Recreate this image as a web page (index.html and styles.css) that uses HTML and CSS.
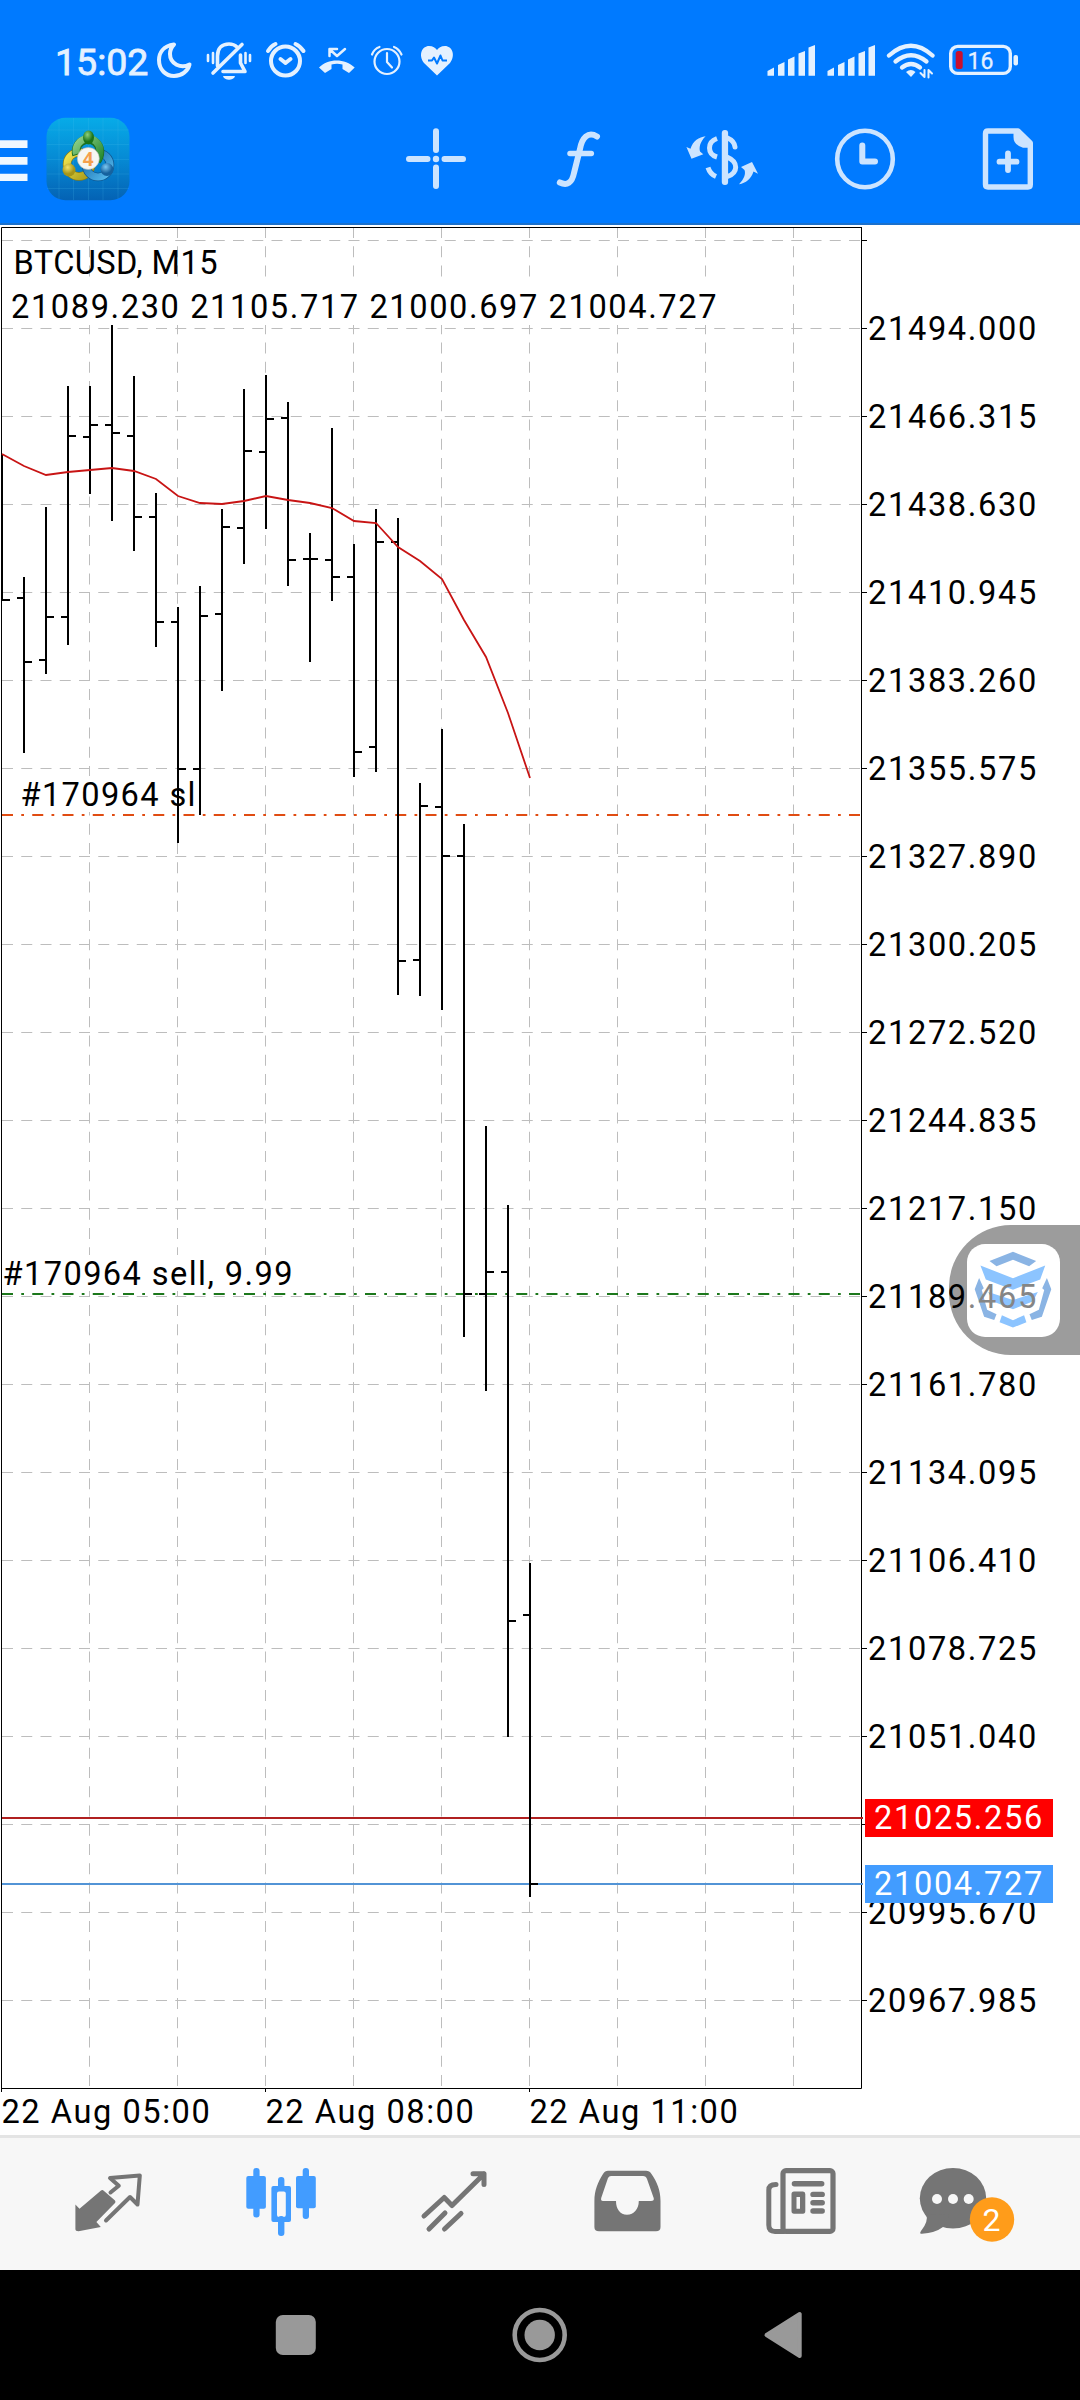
FILE: index.html
```html
<!DOCTYPE html>
<html lang="en">
<head>
<meta charset="utf-8">
<title>BTCUSD, M15</title>
<link rel="stylesheet" href="styles.css">
</head>
<body>
<header class="header">
  <div class="status">
    <span class="time">15:02</span>
    <svg class="ic" width="45" height="42" viewBox="155 40 45 42"><path class="ln" stroke-width="4" d="M174 44.5C163 46 159 53 159 60C159 70 166 76 174 76C182 76 188 71 189.500 64.500C181 69 170 64 170 54C170 50 171.500 47 174 44.500Z"/></svg>
    <svg class="ic" width="56" height="42" viewBox="200 40 56 42">
      <path class="ln" stroke-width="3.600" d="M217.500 66V56C217.500 48 222 44 229 44C232 44 235 45 237 47M242 44.500L213 73M240.500 55V63L245 71.500H223"/>
      <path class="ln" stroke-width="2.600" d="M208 55v6M213 53v10M245.500 53v10M250 55v6"/><path class="fl" d="M223 76H235C234 81 224 81 223 76Z"/>
    </svg>
    <svg class="ic" width="56" height="42" viewBox="256 40 56 42"><circle class="ln" stroke-width="4" cx="285.500" cy="61" r="14.500"/><path class="ln" stroke-width="4" d="M268 51Q271 46 275.500 44M303.500 51Q300 46 295.500 44M280.500 59L285.500 63L290.500 59"/></svg>
    <svg class="ic" width="56" height="42" viewBox="312 40 56 42"><path class="fl" d="M319 67.500C328 58 345 58 354.700 67.500L349 73L342.500 69V64.500Q337 63 331.500 64.500V69L325 73Z"/><path class="ln" stroke-width="2.500" d="M329.500 56V49H337M330.500 50L337 56L345 49" stroke-linejoin="miter"/></svg>
    <svg class="ic" width="44" height="42" viewBox="368 40 44 42"><circle class="ln" stroke-width="2.200" cx="387" cy="61.500" r="12.500"/><path class="ln" stroke-width="2.200" d="M387 53V62L392 67.500M372 54.500Q374 49 379.500 47M401.500 54.500Q399 49 394 47"/></svg>
    <svg class="ic" width="50" height="42" viewBox="412 40 50 42"><path class="fl" d="M437 75.500L424 63C418 55 422 46 429 46C433 46 435.500 48 437 50C438.500 48 441 46 445 46C452 46 456 55 450 63Z"/><path fill="none" stroke="#007aff" stroke-width="2" stroke-linejoin="round" d="M428 60.500H432L434 57.500L437 63.500L440.500 55.500L442.500 60.500H447"/></svg>
    <svg class="ic push" width="60" height="42" viewBox="764 40 60 42"><path class="fl" id="sig" d="M767.500 75.700V71L774 67.500V75.700ZM778 75.700V65L784.500 62V75.700ZM788 75.700V59.500L794.500 56.500V75.700ZM798.500 75.700V53.500L805 51V75.700ZM808.500 75.700V47.500L815 45V75.700Z"/></svg>
    <svg class="ic" width="60" height="42" viewBox="764 40 60 42"><use href="#sig"/></svg>
    <svg class="ic" width="56" height="42" viewBox="884 40 56 42"><g class="ln" stroke-width="4.300" stroke-linecap="butt"><path d="M889 55.500Q911 36 932.500 55.500"/><path d="M895.500 61.500Q911 49 926.500 61.500"/><path d="M902 67.500Q911 60.500 920 67.500"/></g><path class="fl" d="M906 72Q911 68 915.500 72L911 77Z"/><path class="ln" stroke-width="2" d="M924.500 70V77L920.500 73M928.500 77.500V70L932 73.500"/></svg>
    <svg class="ic" width="90" height="42" viewBox="940 40 90 42"><rect class="ln" stroke-width="3.400" x="950.700" y="46.400" width="59.600" height="27" rx="7"/><rect x="955.700" y="51" width="7" height="18" rx="2.500" fill="#c8102e"/><rect class="fl" x="1013.500" y="55" width="4.500" height="10.500" rx="2"/><text class="battery" x="967.500" y="69.200">16</text></svg>
  </div>
  <div class="toolbar">
    <svg class="ic" width="140" height="100" viewBox="0 110 140 100">
      <defs>
        <linearGradient id="bg" x1="0" y1="0" x2="0" y2="1"><stop offset="0" stop-color="#07abe8"/><stop offset=".5" stop-color="#068ad4"/><stop offset="1" stop-color="#0462b4"/></linearGradient>
        <linearGradient id="gr" x1="0" y1="0" x2="1" y2="1"><stop offset="0" stop-color="#8ed08a"/><stop offset="1" stop-color="#23872c"/></linearGradient>
        <linearGradient id="go" x1="0" y1="0" x2="1" y2="1"><stop offset="0" stop-color="#f3e752"/><stop offset="1" stop-color="#a89a18"/></linearGradient>
        <linearGradient id="bl" x1="0" y1="0" x2="1" y2="1"><stop offset="0" stop-color="#1466a8"/><stop offset="1" stop-color="#56bbee"/></linearGradient>
        <radialGradient id="gh" cx=".4" cy=".3"><stop offset="0" stop-color="#8fd07c"/><stop offset="1" stop-color="#1a7419"/></radialGradient>
        <radialGradient id="oh" cx=".4" cy=".3"><stop offset="0" stop-color="#f2e36a"/><stop offset="1" stop-color="#a69518"/></radialGradient>
        <radialGradient id="bh" cx=".4" cy=".3"><stop offset="0" stop-color="#7cc8f2"/><stop offset="1" stop-color="#15629f"/></radialGradient>
      </defs>
      <path fill="#f0f8ff" d="M0 140.300H27.500V148H0ZM0 157H27.500V164.700H0ZM0 173.700H27.500V181H0Z"/>
      <rect x="46.500" y="117.700" width="83" height="82.600" rx="19" fill="url(#bg)"/>
      <path stroke="#4fc0ee" stroke-opacity=".18" fill="none" d="M59 119V199M73.500 118V200M88.500 118V200M103 118V200M118 119V199M47 130H129M47 144.500H129M47 159.500H129M47 174H129M47 188.500H129"/>
      <circle cx="79" cy="164.500" r="12" fill="none" stroke="#8a7e10" stroke-width="8.500"/><circle cx="79" cy="164.500" r="12" fill="none" stroke="url(#go)" stroke-width="7"/>
      <circle cx="98" cy="165" r="12" fill="none" stroke="#0d5690" stroke-width="8.500"/><circle cx="98" cy="165" r="12" fill="none" stroke="url(#bl)" stroke-width="7"/>
      <path d="M76.500 155A12 12 0 1 1 100 151Q100 157 97 161" fill="none" stroke="#1c6e22" stroke-width="8.500"/><path d="M76.500 154A12 12 0 1 1 100 151Q100 157 97 161" fill="none" stroke="url(#gr)" stroke-width="7"/>
      <ellipse cx="88.500" cy="137.500" rx="5.500" ry="7" fill="url(#gh)"/><circle cx="69" cy="170" r="6.500" fill="url(#oh)"/><circle cx="107" cy="169.500" r="6.500" fill="url(#bh)"/>
      <circle cx="88.300" cy="158.500" r="11" fill="#f6f6f2" stroke="#b5b9b0" stroke-width=".6"/><text class="four" x="88.300" y="165.500">4</text>
    </svg>
    <svg class="ic push" width="120" height="100" viewBox="396 110 120 100"><path class="tl" stroke-width="6" d="M436 131.300V150M436 167.500V186M409 159H427.500M444.500 159H463"/><circle class="tf" cx="436" cy="159" r="3.200"/></svg>
    <svg class="ic" width="140" height="100" viewBox="516 110 140 100"><path class="tl" stroke-width="6" stroke-linecap="butt" d="M597 136.500C588 131 582 138 580 149L574 173C572 183 567 186 559.800 182.500"/><path class="tl" stroke-width="5.500" stroke-linecap="butt" d="M570 153.500H591.300"/></svg>
    <svg class="ic" width="164" height="100" viewBox="656 110 164 100">
      <rect class="tf" x="721.800" y="130" width="6.300" height="55" rx="3"/>
      <g class="tl" stroke-width="5"><path stroke-linecap="butt" d="M717 138.500C707 142 707 154 717 157"/><path d="M727.500 138Q734.500 141 735 147"/><path d="M708 167.500Q710 174 716 176.500" stroke-linecap="butt"/><path d="M727 157C739 162 738 173 727.500 176.500"/></g>
      <path class="tf" d="M705.600 136.300C700 142 699 147 700 151.500L703.300 154.300L691.500 158.700L686.400 147L690.500 148.700C693 141 699 137 705.600 136.300ZM739 184.300C744 179 746 174 744.500 170L741 167L752 162L758 173.700L753.500 171.500C751 179 746 183 739 184.300Z"/>
    </svg>
    <svg class="ic" width="148" height="100" viewBox="820 110 148 100"><ellipse class="tl" stroke-width="4.600" cx="865" cy="159" rx="27.800" ry="28.300"/><path class="tl" stroke-width="6" d="M862.300 145.500V161.500H875"/></svg>
    <svg class="ic" width="80" height="100" viewBox="968 110 80 100"><path class="tl" stroke-width="5.400" d="M1018 131H988Q985.500 131 985.500 133.500V184.500Q985.500 187 988 187H1028Q1030.300 187 1030.300 184.500V143Z"/><path class="tf" d="M1013.500 129.500H1019L1032 142V147.700H1023Q1013.500 145 1013.500 137Z"/><path class="tl" stroke-width="5.800" d="M1008 153.500V170M999.500 161.700H1016.500"/></svg>
  </div>
</header>

<main class="chart">
  <div class="board">
    <svg class="plot" width="868" height="1868" viewBox="0 225 868 1868">
      <g class="grid" stroke-dasharray="11 8.250">
        <path d="M2 240.500H861M2 328.500H861M2 416.500H861M2 504.500H861M2 592.500H861M2 680.500H861M2 768.500H861M2 856.500H861M2 944.500H861M2 1032.500H861M2 1120.500H861M2 1208.500H861M2 1296.500H861M2 1384.500H861M2 1472.500H861M2 1560.500H861M2 1648.500H861M2 1736.500H861M2 1824.500H861M2 1912.500H861M2 2000.500H861"/>
        <path d="M89.500 227V2088M177.500 227V2088M265.500 227V2088M353.500 227V2088M441.500 227V2088M529.500 227V2088M617.500 227V2088M705.500 227V2088M793.500 227V2088"/>
      </g>
      <path fill="#fff" d="M8 284H718V325H8ZM18 776H196V812H18ZM3 1255H294V1291H3Z"/>
      <path class="frame" d="M862 227.500H1.500V2092M861.500 227V2088.500H1.500M265.500 2088V2092M529.500 2088V2092M862 240.500h5M862 328.500h5M862 416.500h5M862 504.500h5M862 592.500h5M862 680.500h5M862 768.500h5M862 856.500h5M862 944.500h5M862 1032.500h5M862 1120.500h5M862 1208.500h5M862 1296.500h5M862 1384.500h5M862 1472.500h5M862 1560.500h5M862 1648.500h5M862 1736.500h5M862 1824.500h5M862 1912.500h5M862 2000.500h5"/>
      <path class="level" stroke="#e04c12" stroke-dasharray="11 8.250 2.750 8.250" d="M2 815H861"/>
      <path class="level" stroke="#1c781c" stroke-dasharray="11 8.250 2.750 8.250" d="M2 1294H861"/>
      <path class="level" stroke="#b02020" d="M2 1818H863"/>
      <path class="level" stroke="#5294d6" d="M2 1884H863"/>
      <g class="bars">
        <path d="M2 454V601M2 600H10"/>
        <path d="M24 577V753M17 598H24M24 662H32"/>
        <path d="M46 507V674M39 660H46M46 617H54"/>
        <path d="M68 386V645M61 617H68M68 436H76"/>
        <path d="M90 386V494M83 437H90M90 425H98"/>
        <path d="M112 325V521M105 425H112M112 433H120"/>
        <path d="M134 376V551M127 436H134M134 517H142"/>
        <path d="M156 493V647M149 517H156M156 622H164"/>
        <path d="M178 607V843M171 622H178M178 769H186"/>
        <path d="M200 586V815M193 769H200M200 616H208"/>
        <path d="M222 509V691M215 614H222M222 527H230"/>
        <path d="M244 389V564M237 528H244M244 451H252"/>
        <path d="M266 375V529M259 452H266M266 419H274"/>
        <path d="M288 402V586M281 418H288M288 560H296"/>
        <path d="M310 533V662M303 559H310M310 559H318"/>
        <path d="M332 428V601M325 560H332M332 577H340"/>
        <path d="M354 544V777M347 577H354M354 752H362"/>
        <path d="M376 509V772M369 747H376M376 542H384"/>
        <path d="M398 518V995M391 542H398M398 961H406"/>
        <path d="M420 783V996M413 960H420M420 806H428"/>
        <path d="M442 729V1010M435 807H442M442 856H450"/>
        <path d="M464 824V1337M457 856H464M464 1294H472"/>
        <path d="M486 1126V1391M479 1294H486M486 1272H494"/>
        <path d="M508 1205V1737M501 1272H508M508 1621H516"/>
        <path d="M530 1563V1897M523 1615H530M530 1884H538"/>
      </g>
      <polyline class="ma" points="2,454 24,466 46,475 68,472 90,470 112,468 134,471 156,479 178,496 200,503 222,504 244,501 266,496 288,500 310,503 332,508 354,521 376,523 398,547 420,561 442,579 464,620 486,657 508,713 530,778"/>
      <text x="13.500" y="273.700" textLength="204">BTCUSD, M15</text>
      <text x="11" y="318.200" textLength="705.500">21089.230 21105.717 21000.697 21004.727</text>
      <text x="20.500" y="805.700" textLength="175">#170964 sl</text>
      <text x="2.500" y="1285.200" textLength="290">#170964 sell, 9.99</text>
    </svg>
    <div class="axis">
      <div class="bubble"><svg width="93" height="93" viewBox="382 193 277 277">
        <rect x="382" y="193" width="277" height="277" rx="54" fill="#fff"/>
        <path fill="#8ab4e4" d="M449 244L519 216L588 244L567 259L519 240L470 259ZM418 294L432 325L426 330L442 389L470 402L463 419L433 410L405 328ZM620 294L606 325L612 330L596 389L568 402L575 419L605 410L633 328Z"/>
        <path fill="#8cc4ff" d="M422 257L519 295L615 257L600 299L519 329L438 299ZM445 336L519 360L593 336L578 364L519 387L460 364ZM486 405L519 420L552 405L559 426L519 442L479 426Z"/>
      </svg></div>
      <ol class="prices">
        <li>21494.000</li><li>21466.315</li><li>21438.630</li><li>21410.945</li><li>21383.260</li><li>21355.575</li><li>21327.890</li><li>21300.205</li><li>21272.520</li><li>21244.835</li><li>21217.150</li><li>21189<span class="under">.465</span></li><li>21161.780</li><li>21134.095</li><li>21106.410</li><li>21078.725</li><li>21051.040</li><li></li><li>20995.670</li><li>20967.985</li>
      </ol>
      <span class="tag ask">21025.256</span>
      <span class="tag bid">21004.727</span>
    </div>
  </div>
  <div class="dates"><span>22 Aug 05:00</span><span>22 Aug 08:00</span><span>22 Aug 11:00</span></div>
</main>

<nav class="tabs">
  <svg class="ic" width="180" height="132" viewBox="18 2138 180 132"><path fill="#757575" d="M75.400 2204.500L79.500 2208.700L101 2190.500Q102.500 2189.500 104 2191L115 2200.500Q116 2202 115 2203L96.400 2222L100.800 2227L78.500 2231.200Q75.400 2231.200 75.400 2229Z"/><path class="gl" stroke-width="4" stroke-linejoin="miter" stroke-linecap="butt" d="M110.500 2192.500L118.800 2185.700L110 2178L139.800 2175.500L137.500 2204.500L130 2197L106 2220.500"/></svg>
  <svg class="ic" width="174" height="132" viewBox="198 2138 174 132"><g fill="#429cff"><rect x="253.300" y="2168" width="6.300" height="49.500" rx="3"/><rect x="246.300" y="2176" width="19.600" height="32.700" rx="2"/><rect x="278" y="2177" width="6.400" height="12" rx="3"/><rect x="278" y="2216" width="6.400" height="20" rx="3"/><path fill-rule="evenodd" d="M273.400 2186H289Q291 2186 291 2188V2220Q291 2222 289 2222H273.400Q271.400 2222 271.400 2220V2188Q271.400 2186 273.400 2186ZM279 2191.500Q277 2191.500 277 2193.500V2215Q277 2217 279 2217H283.800Q285.800 2217 285.800 2215V2193.500Q285.800 2191.500 283.800 2191.500Z"/><rect x="302.700" y="2168" width="6.300" height="51" rx="3"/><rect x="296" y="2176" width="19.800" height="32.300" rx="2"/></g></svg>
  <svg class="ic" width="174" height="132" viewBox="372 2138 174 132"><path class="gl" stroke-width="5" d="M424 2216L444.200 2197.500L452 2205.500L484 2174M473 2173.700H484V2184.500M429 2229L445 2213M444.500 2229L461 2213.500"/></svg>
  <svg class="ic" width="174" height="132" viewBox="546 2138 174 132"><path fill="#757575" fill-rule="evenodd" d="M608 2170.700H646Q649.500 2170.700 651.500 2174C657 2182 660.500 2190 660.500 2201V2227Q660.500 2231.300 656 2231.300H599Q594.400 2231.300 594.400 2227V2201C594.400 2190 598 2182 603 2174Q605 2170.700 608 2170.700ZM611 2176Q609 2176 608 2178L601.200 2198Q600.500 2201 603 2201H616C616 2209 620 2214.700 627 2214.700C634 2214.700 638.800 2209 638.800 2201H651Q654.500 2201 653.700 2198L647 2179Q646 2176 643 2176Z"/></svg>
  <svg class="ic" width="174" height="132" viewBox="720 2138 174 132"><rect class="gl" stroke-width="5.200" x="783" y="2170.600" width="50" height="60.800" rx="3"/><path class="gl" stroke-width="5" stroke-linecap="butt" d="M776 2184.500Q768.800 2184.500 768.800 2190V2225Q768.800 2231.400 775 2231.400H784"/><g fill="#757575"><rect x="791.700" y="2181" width="32.700" height="5.400" rx="2.700"/><path fill-rule="evenodd" d="M794 2191.500H803Q805.300 2191.500 805.300 2194V2211Q805.300 2213.700 803 2213.700H794Q791.500 2213.700 791.500 2211V2194Q791.500 2191.500 794 2191.500ZM796.500 2197V2208.700H800V2197Z"/><rect x="810.300" y="2191.700" width="14.600" height="5.400" rx="2.700"/><rect x="810.300" y="2200" width="14.600" height="5.400" rx="2.700"/><rect x="810.300" y="2208.300" width="14.600" height="5.400" rx="2.700"/></g></svg>
  <svg class="ic" width="180" height="132" viewBox="894 2138 180 132"><ellipse cx="953" cy="2198.300" rx="33.200" ry="30.300" fill="#757575"/><path fill="#757575" d="M926 2214Q929 2221 921 2231Q919 2234 922 2233.800Q935 2233 943 2227L950 2215Z"/><circle cx="937" cy="2199" r="5" fill="#f7f7f7"/><circle cx="953" cy="2199" r="5" fill="#f7f7f7"/><circle cx="968.700" cy="2199" r="5" fill="#f7f7f7"/><circle cx="992" cy="2219.500" r="22.200" fill="#ff9c1a"/><text class="count" x="991.500" y="2231">2</text></svg>
</nav>
<footer class="system">
  <svg width="1080" height="130" viewBox="0 2270 1080 130"><g fill="#999"><rect x="275.800" y="2315" width="40" height="40" rx="7"/><circle cx="539.700" cy="2335" r="15.200"/><path stroke="#999" stroke-width="4" stroke-linejoin="round" d="M766.500 2335L799.700 2314V2356Z"/></g><circle cx="539.700" cy="2335" r="25" fill="none" stroke="#999" stroke-width="4.600"/></svg>
</footer>
</body>
</html>
```
FILE: styles.css
```css
* { box-sizing: border-box; }
body { margin: 0; width: 1080px; background: #fff; font-family: Roboto, sans-serif; color: #000; }
svg { display: block; }
.ic { flex: none; }
.push { margin-left: auto; }

.header { height: 225px; background: #007aff; border-bottom: 2px solid #1a70cc; padding-top: 40px; }
.status { display: flex; height: 42px; padding-right: 50px; }
.time { width: 155px; padding-left: 55px; font-size: 37.5px; line-height: 44px; color: #e4f1ff; white-space: nowrap; -webkit-text-stroke: .8px #e4f1ff; }
.battery { font-size: 23px; fill: #e4f1ff; stroke: #e4f1ff; stroke-width: .3px; }
.ln { fill: none; stroke: #e4f1ff; stroke-linecap: round; stroke-linejoin: round; }
.fl { fill: #e4f1ff; }
.toolbar { display: flex; margin-top: 28px; padding-right: 32px; }
.tl { fill: none; stroke: #cce4ff; stroke-linecap: round; stroke-linejoin: round; }
.tf { fill: #cce4ff; }
.four { font: bold 19px "Open Sans", sans-serif; fill: #f5a04c; text-anchor: middle; }

.chart { height: 1910px; }
.board { display: flex; height: 1868px; }
.plot { flex: none; }
.plot text { font-size: 32.6px; fill: #000; }
.grid path { fill: none; stroke: #bdbdbd; stroke-width: 1; }
.frame { fill: none; stroke: #000; stroke-width: 1; }
.level { stroke-width: 2; }
.bars path { fill: none; stroke: #000; stroke-width: 2; }
.ma { fill: none; stroke: #c81414; stroke-width: 1.8; }

.axis { position: relative; width: 212px; padding-top: 60px; }
.prices { position: relative; margin: 0; padding: 0; list-style: none; font-size: 32.6px; letter-spacing: 1.65px; }
.prices li { height: 88px; line-height: 88px; }
.under { color: #858585; }
.tag { position: absolute; left: -3px; width: 188px; height: 38px; padding-left: 9px; font-size: 32.6px; line-height: 39px; letter-spacing: 1.65px; color: #fff; }
.ask { top: 1574px; background: #f00; }
.bid { top: 1640px; background: #429cff; }
.bubble { position: absolute; top: 1000px; right: 0; width: 131px; height: 130px; padding: 19px 0 0 18px; background: #9c9c9c; border-radius: 62px 0 0 62px; }

.dates { display: flex; padding-left: 1.5px; font-size: 32.6px; line-height: 39px; letter-spacing: 1.55px; }
.dates span { width: 264px; white-space: nowrap; }

.tabs { display: flex; justify-content: center; height: 135px; border-top: 3px solid #e4e4e4; background: #f7f7f7; padding-left: 12px; }
.gl { fill: none; stroke: #757575; stroke-linecap: round; stroke-linejoin: round; }
.count { font-size: 32px; fill: #fff; text-anchor: middle; }
.system { height: 130px; background: #000; }
```
